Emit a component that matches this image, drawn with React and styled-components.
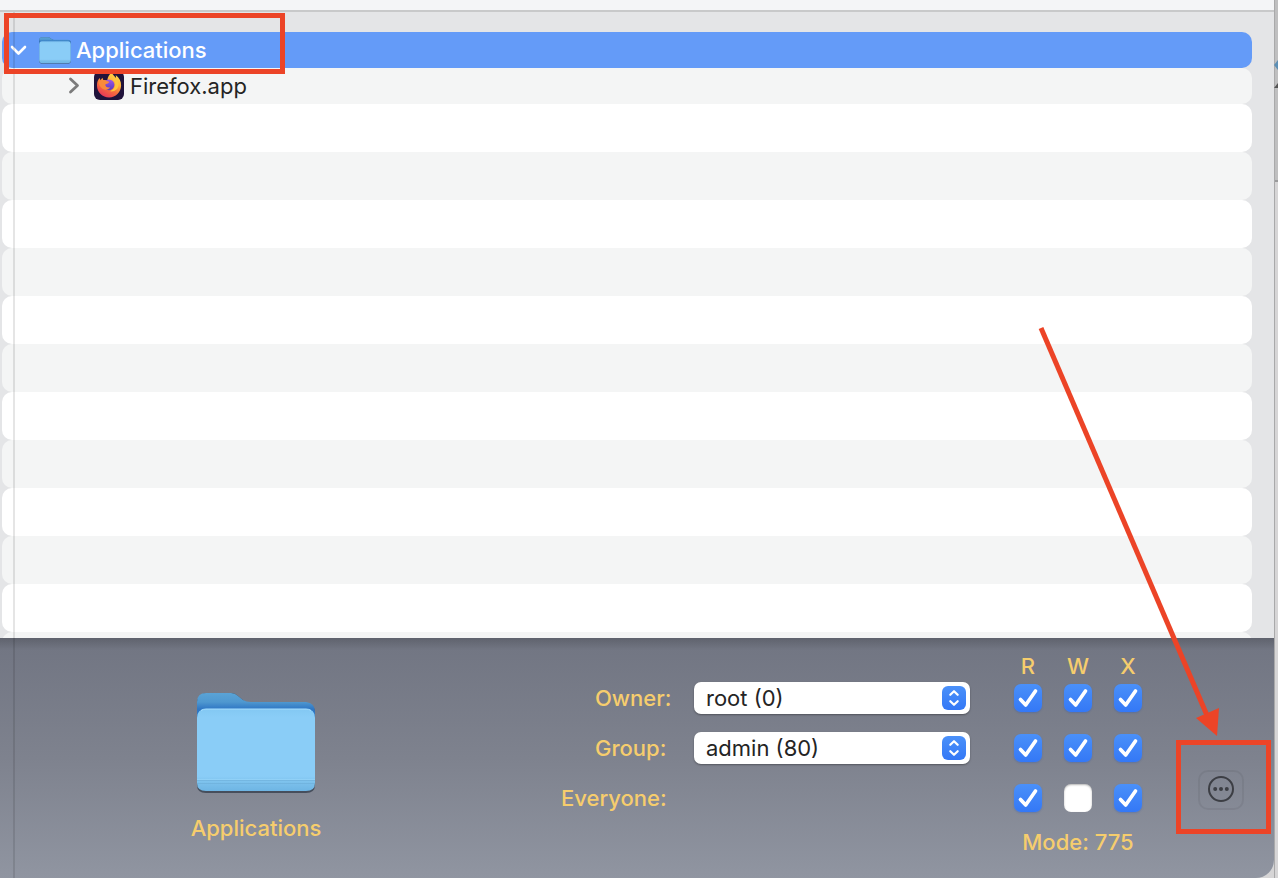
import React, { useState } from "react";
import styled, { createGlobalStyle } from "styled-components";

const GlobalStyle = createGlobalStyle`
  *, *::before, *::after { box-sizing: border-box; }
  body {
    margin: 0;
    font-family: Inter, "Liberation Sans", sans-serif;
    font-size: 22px;
    line-height: 32px;
  }
`;

const mark = "#ec4427";

const Page = styled.div`
  position: relative;
  display: flex;
  height: 100vh;
  min-height: 480px;
  overflow: hidden;
  background: #d6d5d6;
`;

const Window = styled.main`
  position: relative;
  flex: 1;
  min-width: 0;
  display: flex;
  flex-direction: column;
  overflow: hidden;
  background: #e4e5e7;
  border-bottom-right-radius: 18px;
`;

const TitleBar = styled.header`
  flex: none;
  height: 12px;
  background: #f4f5f7;
  border-bottom: 2px solid #c8c9ca;
`;

const EdgeLine = styled.span`
  position: absolute;
  top: 12px;
  bottom: 0;
  left: 13px;
  width: 2px;
  background: rgba(0, 0, 0, 0.1);
  pointer-events: none;
`;

const Desktop = styled.svg`
  flex: none;
  display: block;
  width: 4px;
  height: 100%;
`;

const Tree = styled.ul`
  flex: 1;
  min-height: 0;
  margin: 0;
  padding: 20px 22px 0 2px;
  overflow: hidden;
  list-style: none;
`;

const tones = { selected: "#649bf8", even: "#ffffff", odd: "#f4f5f5" };

const Row = styled.li`
  display: flex;
  align-items: center;
  height: ${(p) => (p.$item ? 36 : 48)}px;
  padding-left: ${(p) => (p.$depth ? 62 : 6)}px;
  border-radius: 10px;
  background: ${(p) => tones[p.$tone]};
  color: ${(p) => (p.$tone === "selected" ? "#fff" : "#242424")};
  font-weight: ${(p) => (p.$tone === "selected" ? 500 : 400)};
`;

const Disclosure = styled.button`
  display: grid;
  place-items: center;
  width: 20px;
  height: 24px;
  padding: 0;
  border: 0;
  background: none;
  color: ${(p) => (p.$light ? "#fff" : "#7b7b7b")};
`;

const RowIcon = styled.span`
  display: flex;
  width: 32px;
  margin: 0 5px 0 ${(p) => p.$gap}px;
`;

const Panel = styled.section`
  flex: none;
  display: flex;
  align-items: flex-start;
  padding: 12px 30px 20px 0;
  background:
    linear-gradient(rgba(0, 0, 0, 0.16), rgba(0, 0, 0, 0) 12px),
    linear-gradient(#717582, #7e828e 50%, #9095a1);
  color: #f6cd6d;
  font-weight: 500;
`;

const Preview = styled.figure`
  flex: 1;
  margin: 0;
  padding-top: 42px;
  display: flex;
  flex-direction: column;
  align-items: center;
  gap: 18px;
`;

const Permissions = styled.form`
  display: grid;
  grid-template-columns: 133px 276px 172px;
  grid-template-rows: 32px 50px 50px 44px 32px;
  margin-left: 49px;
`;

const FieldLabel = styled.label`
  grid-column: 1;
  grid-row: ${(p) => p.$row};
  padding-left: ${(p) => (p.$inset ? 34 : 0)}px;
`;

const Heading = styled.span`
  text-align: center;
`;

const Flags = styled.div`
  grid-column: 3;
  grid-row: ${(p) => p.$row};
  display: grid;
  grid-template-columns: repeat(3, 28px);
  gap: 22px;
  align-items: center;
  height: 32px;
  margin-left: 44px;
`;

const Mode = styled.output`
  grid-column: 3;
  grid-row: 5;
  margin-left: 44px;
  text-align: center;
  white-space: nowrap;
`;

const SelectBox = styled.div`
  grid-column: 2;
  grid-row: ${(p) => p.$row};
  display: grid;
  align-items: center;
  height: 32px;
  > * { grid-area: 1 / 1; }
  > svg { justify-self: end; margin-right: 4px; pointer-events: none; }
`;

const Select = styled.select`
  appearance: none;
  width: 100%;
  height: 32px;
  padding: 0 36px 0 12px;
  border: 0;
  border-radius: 7px;
  background: #fff;
  color: #242424;
  font: inherit;
  font-weight: 400;
  box-shadow: 0 1px 2px rgba(0, 0, 0, 0.35);
`;

const CheckBox = styled.span`
  display: grid;
  width: 28px;
  height: 28px;
  > * { grid-area: 1 / 1; }
  > svg { pointer-events: none; }
`;

const CheckInput = styled.input`
  appearance: none;
  width: 28px;
  height: 28px;
  margin: 0;
  border-radius: 7px;
  background: #fff;
  box-shadow: inset 0 1px 2px rgba(0, 0, 0, 0.3);
  &:checked {
    background: linear-gradient(#4a90f9, #3478f6);
    box-shadow: 0 1px 2px rgba(30, 80, 190, 0.3);
  }
`;

const Actions = styled.div`
  position: relative;
  margin: 120px 0 0 56px;
`;

const MoreButton = styled.button`
  display: grid;
  place-items: center;
  width: 46px;
  height: 40px;
  padding: 0 0 2px;
  border: 2px solid rgba(0, 0, 0, 0.06);
  border-radius: 10px;
  background: transparent;
  color: #3c3e44;
`;

const ButtonMark = styled.span`
  position: absolute;
  inset: -30px -27px -24px -22px;
  border: 5px solid ${mark};
  pointer-events: none;
`;

const RowMark = styled.span`
  position: absolute;
  top: 13px;
  left: 4px;
  width: 281px;
  height: 61px;
  border: 5px solid ${mark};
  pointer-events: none;
`;

const Arrow = styled.svg`
  position: absolute;
  right: 48px;
  bottom: 138px;
  pointer-events: none;
`;

function Folder({ width, height, id }) {
  return (
    <svg width={width} height={height} viewBox="0 0 120 102" preserveAspectRatio="none" aria-hidden="true">
      <defs>
        <linearGradient id={`${id}-back`} x1="0" y1="0" x2="0" y2="1">
          <stop offset="0" stopColor="#5aa3d6" />
          <stop offset="0.1" stopColor="#4f98d0" />
          <stop offset="0.18" stopColor="#2f77c4" />
        </linearGradient>
        <linearGradient id={`${id}-front`} x1="0" y1="0" x2="0" y2="1">
          <stop offset="0" stopColor="#83c8f3" />
          <stop offset="0.1" stopColor="#8acdf7" />
          <stop offset="0.82" stopColor="#8acdf7" />
          <stop offset="0.9" stopColor="#7bc0eb" />
          <stop offset="1" stopColor="#6eb5e4" />
        </linearGradient>
      </defs>
      <path d="M1 93V12Q1 2 10 1h26q3 0 6 3l5 4q3 3 8 3h55q9 1 9 10v72q0 8-9 8H10q-9 0-9-8Z" fill="rgba(30,40,55,.6)" />
      <path d="M1 90V10Q1 1 10 1h25q4 0 7 3l5 4q3 2 8 2h55q9 1 9 10v70Z" fill={`url(#${id}-back)`} />
      <path d="M1 26q0-9 9-9h100q9 0 9 9v65q0 8-9 8H10q-9 0-9-8Z" fill={`url(#${id}-front)`} />
      <path d="M5 18.500Q7 17 10 17h100q3 0 5 1.500" stroke="#a9e0ff" fill="none" />
      <path d="M1 88.500h118M1 91.500h118" stroke="#69abd6" strokeOpacity=".55" />
      <path d="M1 87.500h118" stroke="#99d7fb" strokeOpacity=".6" />
    </svg>
  );
}

function Firefox() {
  return (
    <svg width="32" height="32" viewBox="0 0 32 32" aria-hidden="true">
      <defs>
        <linearGradient id="fx-fire" x1=".8" y1="0" x2=".25" y2="1">
          <stop offset="0" stopColor="#ffe54a" />
          <stop offset=".35" stopColor="#ffb03a" />
          <stop offset=".65" stopColor="#f76a3d" />
          <stop offset="1" stopColor="#e8325c" />
        </linearGradient>
        <linearGradient id="fx-globe" x1="0" y1="0" x2="0" y2="1">
          <stop offset="0" stopColor="#a356e8" />
          <stop offset="1" stopColor="#553bc0" />
        </linearGradient>
      </defs>
      <rect x="1" y="1" width="30" height="29" rx="6" fill="#20133b" />
      <path d="M18.500 2.500c1.500 2 2.500 3.500 4.500 5.500 0-1.300 0-2-.4-3 3.800 2.800 5.600 6.300 5.500 10.500-.2 6.700-5.400 11.900-12 11.900S4 22.300 4 15.500c0-3.700 1-5.800 2.600-7.600l.9 2.300 1.900-2.500.9 2.300 4 .3c.5-3.300 1.700-5.600 4.200-7.800Z" fill="url(#fx-fire)" />
      <circle cx="16" cy="14.800" r="5.400" fill="url(#fx-globe)" />
      <path d="M5.500 12c2-2 5-2.400 7.500-1.200l3.200.9c0 1.800-2.500 2-4 2.800.2 2.600 2.600 3.600 5 2.800-1.500 2.700-5 3.200-7.700 1.400C7 17 5.800 14.700 5.500 12Z" fill="#f98a3a" />
      <path d="M20 9.500c1.500 1.300 2.300 3 2.200 4.800-.1 3.300-2 5.800-5.200 7 4.500.8 8.200-1.800 8.600-6.200.2-3.200-1.700-6.400-4.600-7.400Z" fill="#ffc53f" />
    </svg>
  );
}

function Stepper() {
  return (
    <svg width="24" height="24" viewBox="0 0 24 24" aria-hidden="true">
      <defs>
        <linearGradient id="stepper" x1="0" y1="0" x2="0" y2="1">
          <stop offset="0" stopColor="#4a90f9" />
          <stop offset="1" stopColor="#3478f6" />
        </linearGradient>
      </defs>
      <rect width="24" height="24" rx="6" fill="url(#stepper)" />
      <path d="M8.300 8.800 12 5.200 15.700 8.800M8.300 15.200l3.700 3.600 3.700-3.600" fill="none" stroke="#fff" strokeWidth="2.200" strokeLinecap="round" strokeLinejoin="round" />
    </svg>
  );
}

function Check({ label, checked, onChange }) {
  return (
    <CheckBox>
      <CheckInput type="checkbox" aria-label={label} checked={checked} onChange={onChange} />
      {checked && (
        <svg width="28" height="28" viewBox="0 0 28 28" aria-hidden="true">
          <path d="M6.500 15.500 11.700 21 21.500 7" fill="none" stroke="#fff" strokeWidth="3.700" strokeLinecap="round" strokeLinejoin="round" />
        </svg>
      )}
    </CheckBox>
  );
}

const flags = ["R", "W", "X"];
const classes = ["Owner", "Group", "Everyone"];
const emptyRows = Array.from({ length: 12 }, (_, i) => (i % 2 ? "odd" : "even"));

export default function App() {
  const [bits, setBits] = useState([7, 7, 5]);
  const toggle = (row, bit) =>
    setBits(bits.map((value, i) => (i === row ? value ^ bit : value)));

  return (
    <Page>
      <GlobalStyle />
      <Window>
        <TitleBar />
        <Tree>
          <Row $item $tone="selected">
            <Disclosure $light type="button" aria-label="Collapse Applications">
              <svg width="20" height="20" viewBox="0 0 20 20" fill="none" stroke="currentColor" strokeWidth="2.600" strokeLinecap="round" strokeLinejoin="round">
                <path d="m4 7 6.500 6.500L17 7" />
              </svg>
            </Disclosure>
            <RowIcon $gap={11}><Folder id="small" width={32} height={27} /></RowIcon>
            Applications
          </Row>
          <Row $item $depth={1} $tone="odd">
            <Disclosure type="button" aria-label="Expand Firefox.app">
              <svg width="20" height="20" viewBox="0 0 20 20" fill="none" stroke="currentColor" strokeWidth="2.800" strokeLinecap="round" strokeLinejoin="round">
                <path d="m6.500 3 7 6.500-7 6.500" />
              </svg>
            </Disclosure>
            <RowIcon $gap={9}><Firefox /></RowIcon>
            Firefox.app
          </Row>
          {emptyRows.map((tone, i) => <Row key={i} $tone={tone} aria-hidden="true" />)}
        </Tree>
        <Panel>
          <Preview>
            <Folder id="large" width={120} height={102} />
            <figcaption>Applications</figcaption>
          </Preview>
          <Permissions>
            <Flags $row={1}>
              {flags.map((flag) => <Heading key={flag}>{flag}</Heading>)}
            </Flags>
            <FieldLabel $inset $row={2} htmlFor="owner">Owner:</FieldLabel>
            <SelectBox $row={2}>
              <Select id="owner"><option>root (0)</option></Select>
              <Stepper />
            </SelectBox>
            <FieldLabel $inset $row={3} htmlFor="group">Group:</FieldLabel>
            <SelectBox $row={3}>
              <Select id="group"><option>admin (80)</option></Select>
              <Stepper />
            </SelectBox>
            <FieldLabel as="span" $row={4}>Everyone:</FieldLabel>
            {classes.map((name, row) => (
              <Flags key={name} $row={row + 2} role="group" aria-label={name}>
                {flags.map((flag, i) => {
                  const bit = 4 >> i;
                  return (
                    <Check key={flag} label={`${name} ${flag}`} checked={Boolean(bits[row] & bit)} onChange={() => toggle(row, bit)} />
                  );
                })}
              </Flags>
            ))}
            <Mode>Mode: {bits.join("")}</Mode>
          </Permissions>
          <Actions>
            <MoreButton type="button" aria-label="More actions">
              <svg width="28" height="28" viewBox="0 0 28 28" fill="none" aria-hidden="true">
                <circle cx="14" cy="14" r="12" stroke="currentColor" strokeWidth="2" />
                <g fill="currentColor">
                  <circle cx="8.200" cy="14" r="2" />
                  <circle cx="14" cy="14" r="2" />
                  <circle cx="19.800" cy="14" r="2" />
                </g>
              </svg>
            </MoreButton>
            <ButtonMark />
          </Actions>
        </Panel>
        <EdgeLine />
      </Window>
      <Desktop aria-hidden="true">
        <rect width="4" height="180" fill="#bfbfc0" />
        <rect y="180" width="4" height="2" fill="#9b9b9c" />
        <rect y="182" width="4" height="100%" fill="#d6d5d6" />
        <rect width="1" height="100%" fill="#a9a9aa" />
        <path d="M0 65 4 60v10Z" fill="#5c8fb5" />
        <path d="M0 88 4 83v5Z" fill="#555" />
      </Desktop>
      <RowMark />
      <Arrow width="192" height="414" viewBox="0 0 192 414" aria-hidden="true">
        <path d="M3 2 171 394" stroke={mark} strokeWidth="5" />
        <path d="M179 410 158 392l23-10Z" fill={mark} />
      </Arrow>
    </Page>
  );
}
